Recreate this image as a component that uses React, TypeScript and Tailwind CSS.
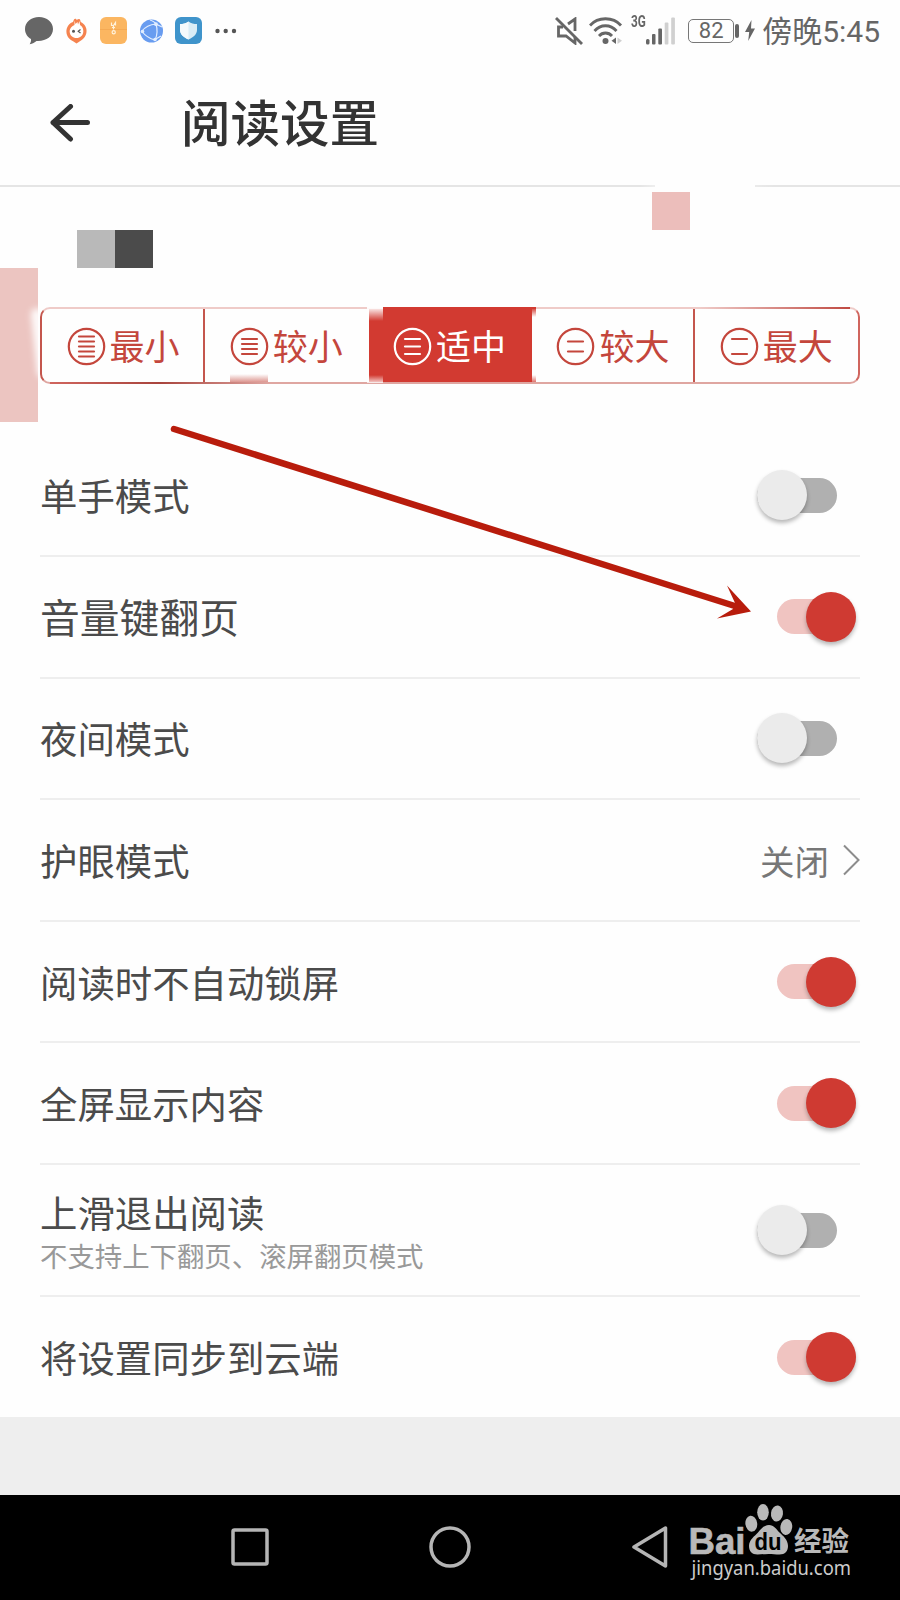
import { useState } from 'react'
import clsx from 'clsx'

const FONT = "font-['Roboto','Noto_Sans_CJK_SC',sans-serif]"

interface SizeOption {
  label: string
  // vertical offsets of the lines inside the round glyph
  lines: number[]
}

const SIZES: SizeOption[] = [
  { label: '最小', lines: [9.5, 14.5, 19.5, 24.5, 29.5] },
  { label: '较小', lines: [12, 17, 22, 27] },
  { label: '适中', lines: [12, 19.5, 27] },
  { label: '较大', lines: [14.5, 24.5] },
  { label: '最大', lines: [12, 27] },
]

interface Setting {
  label: string
  hint?: string
  value?: string
  on?: boolean
  large?: boolean
}

const SETTINGS: Setting[] = [
  { label: '单手模式', on: false },
  { label: '音量键翻页', on: true, large: true },
  { label: '夜间模式', on: false },
  { label: '护眼模式', value: '关闭' },
  { label: '阅读时不自动锁屏', on: true },
  { label: '全屏显示内容', on: true },
  { label: '上滑退出阅读', hint: '不支持上下翻页、滚屏翻页模式', on: false },
  { label: '将设置同步到云端', on: true },
]

function StatusBar() {
  return (
    <div className="flex h-[61px] items-center justify-between pl-[25px] pr-5 text-[#666]">
      <div className="flex items-center">
        <svg width="28" height="28" viewBox="0 0 28 28">
          <path d="M14 0C6 0 0 5 0 12c0 4.500 2.500 8 6 10 .3 2-.4 3.500-1.300 5.200 3-.5 5-1.700 6.800-3.300C21 24.500 28 19.500 28 12 28 5 22 0 14 0Z" fill="#666" />
        </svg>
        <svg className="ml-[13px]" width="21" height="26" viewBox="0 0 21 26">
          <path d="M8 1.500c1-1.200 2.300-.6 2.700.6C12 .8 14 .5 14.200 2l.5 2C18.500 6 21 9.500 20.500 14c-.5 5-4 7.500-7 9.500l-3 2-3-2C4 21.500.7 19 .4 14 .1 9 3.500 5 7 4Z" fill="#f5834f" />
          <path d="M8.500 2.500 9.500 6l2-2 .5 2.500 1.500-3.500.5 4C17 9 17.500 11.500 17.300 14c-.4 3.500-3 6-6.800 6S4 17.500 3.700 14C3.500 10.500 6 8 8.500 7Z" fill="#fff" />
          <circle cx="7.500" cy="13.300" r="1.500" fill="#555" />
          <path d="m14.500 11.500-2.300 1.800 2.300 1.700" fill="none" stroke="#555" strokeWidth="1.200" />
        </svg>
        <svg className="ml-[13px]" width="27" height="27" viewBox="0 0 27 27">
          <rect width="27" height="27" rx="6" fill="#fbb661" />
          <path d="M0 12.500h27" stroke="#f4a750" strokeWidth=".8" />
          <g fill="none" stroke="#fff2dc" strokeWidth="1.200">
            <path d="M11.500 5.500v3h2l2-3v3M13.500 8.500v4M12 10.500h3" />
            <circle cx="13.700" cy="15.300" r="1.600" />
          </g>
        </svg>
        <svg className="ml-[13px]" width="23" height="24" viewBox="0 0 23 24">
          <circle cx="11.500" cy="12" r="11.500" fill="#689cf0" />
          <g fill="none" stroke="#e1edff" strokeWidth="1.200">
            <path d="M1.500 12.500C5 8 10 5.500 16 5M2 12.500c3 4 7 7 13 8.500M16 5c1.500 5 1.500 11-1 16M10 1c3 1 5 2 6 4l6 3M15 20.500l6-3.500" />
          </g>
          <circle cx="2.500" cy="12.500" r="1.800" fill="#e1edff" />
          <circle cx="16" cy="5.200" r="1.900" fill="#e1edff" />
          <circle cx="15" cy="20.500" r="1.800" fill="#e1edff" />
        </svg>
        <svg className="ml-3" width="27" height="27" viewBox="0 0 27 27">
          <rect width="27" height="27" rx="6" fill="#3f94cb" />
          <path d="M13.500 4.500c2.500 2 5.500 2.500 8.500 2.500v6c0 4.500-4 7.500-8.500 9.500C9 20.500 5 17.500 5 13V7c3 0 6-.5 8.500-2.500Z" fill="#d9edf6" />
          <path d="M13.500 4.500v18C9 20.500 5 17.500 5 13V7c3 0 6-.5 8.500-2.500Z" fill="#f4fafc" />
        </svg>
        <svg className="ml-[13px]" width="22" height="6" viewBox="0 0 22 6" fill="#555">
          <circle cx="2.500" cy="3" r="2.200" />
          <circle cx="10.700" cy="3" r="2.200" />
          <circle cx="19" cy="3" r="2.200" />
        </svg>
      </div>

      <div className="flex items-center">
        <svg width="28" height="28" viewBox="0 0 28 28" fill="none" stroke="#666" strokeWidth="2.800">
          <path d="M1 1l26 26" />
          <path d="M13 7l7-5v12M20 20v6l-9-7H3.500V10H8" />
        </svg>
        <svg className="ml-[6px]" width="34" height="28" viewBox="0 0 34 28" fill="none" stroke="#666" strokeWidth="2.800">
          <path d="M1 8.500C9-.5 24-.5 32 8.500M5.500 14c6-7 16-7 22 0M10 19c3.500-4 9.500-4 13 0" />
          <circle cx="16.500" cy="24" r="3" fill="#666" stroke="none" />
          <path d="M27 20.500v6.500l-4.500-3.300Z" fill="#666" stroke="none" />
          <path d="M28.500 20.500v6.500l4.500-3.300Z" fill="#d0d0d0" stroke="none" />
        </svg>
        <span className="ml-2 mb-[17px] w-[15px] origin-left scale-x-[.74] text-[16px] font-bold leading-none">3G</span>
        <svg width="30" height="28" viewBox="0 0 30 28">
          <rect x="0" y="22" width="3.500" height="5.500" rx="1.500" fill="#666" />
          <rect x="6" y="17" width="3.500" height="10.500" rx="1" fill="#666" />
          <rect x="12.300" y="11.500" width="3.700" height="16" rx="1" fill="#666" />
          <rect x="18.700" y="5.500" width="3.700" height="22" rx="1" fill="#d0d0d0" />
          <rect x="25.200" y=".5" width="3.700" height="27" rx="1" fill="#d0d0d0" />
        </svg>
        <div className="ml-3 flex h-6 w-[46px] items-center justify-center rounded-[5px] border-[1.500px] border-[#777] text-[22px] leading-none">
          82
        </div>
        <div className="ml-px h-[14px] w-1 rounded-sm bg-[#666]" />
        <svg className="ml-[6px]" width="10" height="21" viewBox="0 0 10 21">
          <path d="M6.500 0 0 12h4.200L3.200 21 10 8.500H6Z" fill="#666" />
        </svg>
        <div className="ml-[7px] flex items-center whitespace-nowrap pt-[2px]">
          <span className="text-[30px] leading-[40px]">傍晚</span>
          <span className="text-[30px] leading-[40px]">5:45</span>
        </div>
      </div>
    </div>
  )
}

function Header() {
  return (
    <header className="relative flex h-[126px] items-center border-b-2 border-[#e5e5e5] pl-[50px]">
      <svg width="40" height="38" viewBox="0 0 40 38" fill="none" stroke="#333" strokeWidth="5" strokeLinecap="round" strokeLinejoin="round">
        <path d="M37.500 18.500H3M20.500 2.500 3 18.500l17.500 16.500" />
      </svg>
      <h1 className="ml-[91px] pt-[6px] text-[49.500px] font-medium leading-none text-[#333]">阅读设置</h1>
      {/* washed-out stretch of the divider */}
      <div className="absolute -bottom-[2px] left-[640px] h-[2px] w-[135px] bg-linear-to-r from-transparent via-white via-30% to-transparent" />
      <div className="absolute -bottom-[2px] left-[655px] h-[2px] w-[100px] bg-[#fefefe]" />
    </header>
  )
}

function SizePicker() {
  const [active, setActive] = useState(2)

  return (
    <div className="relative mx-10 flex h-[77px] rounded-[10px] border-2 border-b-[#dfa6a1] border-l-[#c4564d] border-r-[#d0655e] border-t-[#efcbc8]">
      {SIZES.map((size, i) => (
        <button
          key={size.label}
          onClick={() => setActive(i)}
          className={clsx(
            'relative flex items-center pl-[24.500px]',
            i === SIZES.length - 1 ? 'flex-1' : 'w-[163.300px]',
            i === active ? 'bg-[#d23a31] text-white' : 'text-[#c4463c]',
            (i === 0 || i === 3) && 'border-r-2 border-[#c4564d]',
          )}
        >
          <svg className="mt-[2px] shrink-0" width="39" height="39" viewBox="0 0 39 39" fill="none" stroke="currentColor" strokeWidth="2.200" strokeLinecap="round">
            <circle cx="19.500" cy="19.500" r="17.700" />
            {size.lines.map((y) => (
              <path key={y} d={`M12 ${y}h15`} />
            ))}
          </svg>
          <span className="ml-[4px] whitespace-nowrap pt-[7px] text-[35px] leading-none">{size.label}</span>
        </button>
      ))}
      {/* stronger stretches of the outline */}
      <div className="absolute -bottom-[2px] left-2 h-[2px] w-[220px] bg-linear-to-r from-[#d0655e] via-[#a8443d] to-transparent" />
      <div className="absolute -top-[2px] right-2 h-[2px] w-[150px] bg-linear-to-l from-[#c04a42] to-transparent" />
      <div className="absolute -top-[2px] left-[341px] h-[2px] w-[153px] bg-[#d23a31]" />
      {/* smudged corners around the selected cell */}
      <div className="absolute -top-[2px] left-[325px] h-[14px] w-4 bg-linear-to-b from-white to-transparent" />
      <div className="absolute -bottom-px left-[325px] h-2 w-4 bg-linear-to-t from-white/80 to-transparent" />
      <div className="absolute bottom-0 left-[188px] h-2 w-[38px] bg-linear-to-t from-[#dd9791] to-transparent" />
      <div className="absolute -top-px left-[490px] h-[9px] w-1 bg-linear-to-b from-[#d23a31] to-transparent" />
      <div className="absolute bottom-0 left-[490px] h-[7px] w-1 bg-linear-to-t from-[#d23a31]/70 to-transparent" />
    </div>
  )
}

function Toggle({ initial }: { initial: boolean }) {
  const [on, setOn] = useState(initial)

  return (
    <button
      role="switch"
      aria-checked={on}
      onClick={() => setOn(!on)}
      className={clsx('flex h-[50px] w-20 items-center', on ? 'mr-1 justify-end' : 'mr-[23px] justify-start')}
    >
      <div className={clsx('flex h-[35px] shrink-0 items-center rounded-full', on ? 'w-[79px] justify-end bg-[#f0c4c1]' : 'w-20 bg-[#b0b0b0]')}>
        <div
          className={clsx(
            'size-[50px] shrink-0 rounded-full shadow-[0_3px_4px_rgba(0,0,0,0.28)]',
            on ? 'bg-[#cf3a32]' : 'bg-[#ebebeb]',
          )}
        />
      </div>
    </button>
  )
}

function SettingRow({ item, last }: { item: Setting; last: boolean }) {
  return (
    <div
      className={clsx(
        'flex items-center justify-between border-[#eee]',
        item.hint ? 'h-[132px]' : last ? 'h-[120px]' : 'h-[121.600px]',
        !last && 'border-b-2',
      )}
    >
      <div className={clsx('flex flex-col text-[#4b4b4b]', item.hint ? 'pt-[9px]' : 'pt-[6px]')}>
        <span className={clsx(item.large ? 'text-[39.800px]' : 'text-[37.400px]', item.hint ? 'leading-[47px]' : 'leading-[50px]')}>
          {item.label}
        </span>
        {item.hint && <span className="text-[27.400px] leading-[38px] text-[#999]">{item.hint}</span>}
      </div>
      {item.value ? (
        <div className="flex items-center text-[#777]">
          <span className="pt-[5px] text-[34.500px] leading-[50px]">{item.value}</span>
          <svg className="ml-[14px]" width="17" height="32" viewBox="0 0 17 32" fill="none" stroke="#8c8c8c" strokeWidth="2">
            <path d="M1 1.500 15.500 16 1 30.500" />
          </svg>
        </div>
      ) : (
        <Toggle initial={!!item.on} />
      )}
    </div>
  )
}

function Watermark() {
  return (
    <svg width="180" height="84" viewBox="0 0 180 84" fill="#b9b9b9">
      <text x="2.500" y="53.500" fontSize="36" fontWeight="700" textLength="57" lengthAdjust="spacingAndGlyphs" stroke="#b9b9b9" strokeWidth=".6" className="font-['Liberation_Sans',sans-serif]">Bai</text>
      <ellipse cx="65.300" cy="23.700" rx="5.900" ry="8" transform="rotate(-8 65.300 23.700)" />
      <ellipse cx="77" cy="12.300" rx="5.800" ry="8.300" />
      <ellipse cx="91" cy="13.500" rx="6" ry="8" transform="rotate(8 91 13.500)" />
      <ellipse cx="100.300" cy="27" rx="5.900" ry="8" transform="rotate(8 100.300 27)" />
      <path d="M83 25c-5 0-8 4-11 7.500s-9 7-9 13.500c0 5 3 8.500 8.500 8.500 4 0 7-.6 11-.6s7 .6 11 .6c5.500 0 8.500-3.500 8.500-8.500 0-6.500-5-10-8.500-13.500S88 25 83 25Z" />
      <text x="68.500" y="50" fontSize="24" fontWeight="700" fill="#000" textLength="27" lengthAdjust="spacingAndGlyphs" className="font-['Liberation_Sans',sans-serif]">du</text>
      <text x="108" y="51" fontSize="27.500" fontWeight="700" textLength="55" lengthAdjust="spacingAndGlyphs" className="font-['Noto_Sans_CJK_SC',sans-serif]">经验</text>
      <text x="5.500" y="75" fontSize="20" fill="#ccc" textLength="159.500" lengthAdjust="spacingAndGlyphs" className="font-['Noto_Sans',sans-serif]">jingyan.baidu.com</text>
    </svg>
  )
}

function NavBar() {
  return (
    <nav className="flex h-[105px] items-center bg-black pl-[231px]">
      <svg width="38" height="38" viewBox="0 0 38 38" fill="none" stroke="#b5b5b5" strokeWidth="3.500">
        <rect x="2" y="2" width="34" height="34" rx="1.500" />
      </svg>
      <svg className="ml-40" width="42" height="42" viewBox="0 0 42 42" fill="none" stroke="#b5b5b5" strokeWidth="3.500">
        <circle cx="21" cy="21" r="19" />
      </svg>
      <svg className="ml-[161px]" width="36" height="42" viewBox="0 0 36 42" fill="none" stroke="#b5b5b5" strokeWidth="3.500" strokeLinejoin="round">
        <path d="M33.500 2v38L2 21Z" />
      </svg>
      <div className="-mt-[11px] ml-[18px]">
        <Watermark />
      </div>
    </nav>
  )
}

export default function App() {
  return (
    <div className={clsx('relative flex h-[1600px] w-[900px] flex-col overflow-hidden bg-[#fefefe]', FONT)}>
      <StatusBar />
      <Header />
      <div className="flex h-[120px] items-start pl-[77px] pt-[43px]">
        <div className="size-[38px] bg-[#b9b9b9]" />
        <div className="size-[38px] bg-[#4b4b4b]" />
      </div>
      <SizePicker />
      <main className="mt-[51.500px] flex-1 px-10">
        {SETTINGS.map((item, i) => (
          <SettingRow key={item.label} item={item} last={i === SETTINGS.length - 1} />
        ))}
      </main>
      <div className="h-[78px] bg-[#eee]" />
      <NavBar />

      {/* censor blocks and the pointer drawn over the page */}
      <div className="absolute left-[652px] top-[192px] size-[38px] bg-[#ecbebb]" />
      <div className="absolute left-0 top-[268px] h-[154px] w-[38px] overflow-hidden bg-[#ecc5c1]">
        <div className="absolute left-[34px] top-[40px] h-[70px] w-3 -rotate-6 rounded-full bg-white/90 blur-[3px]" />
      </div>
      <svg className="pointer-events-none absolute left-0 top-0" width="900" height="700" viewBox="0 0 900 700">
        <path d="M174 429 738 607" stroke="#b81c0c" strokeWidth="6.500" strokeLinecap="round" />
        <path d="M751 611.500 727 585.500 735 603 733 609 717 618.500Z" fill="#b81c0c" />
      </svg>
    </div>
  )
}
